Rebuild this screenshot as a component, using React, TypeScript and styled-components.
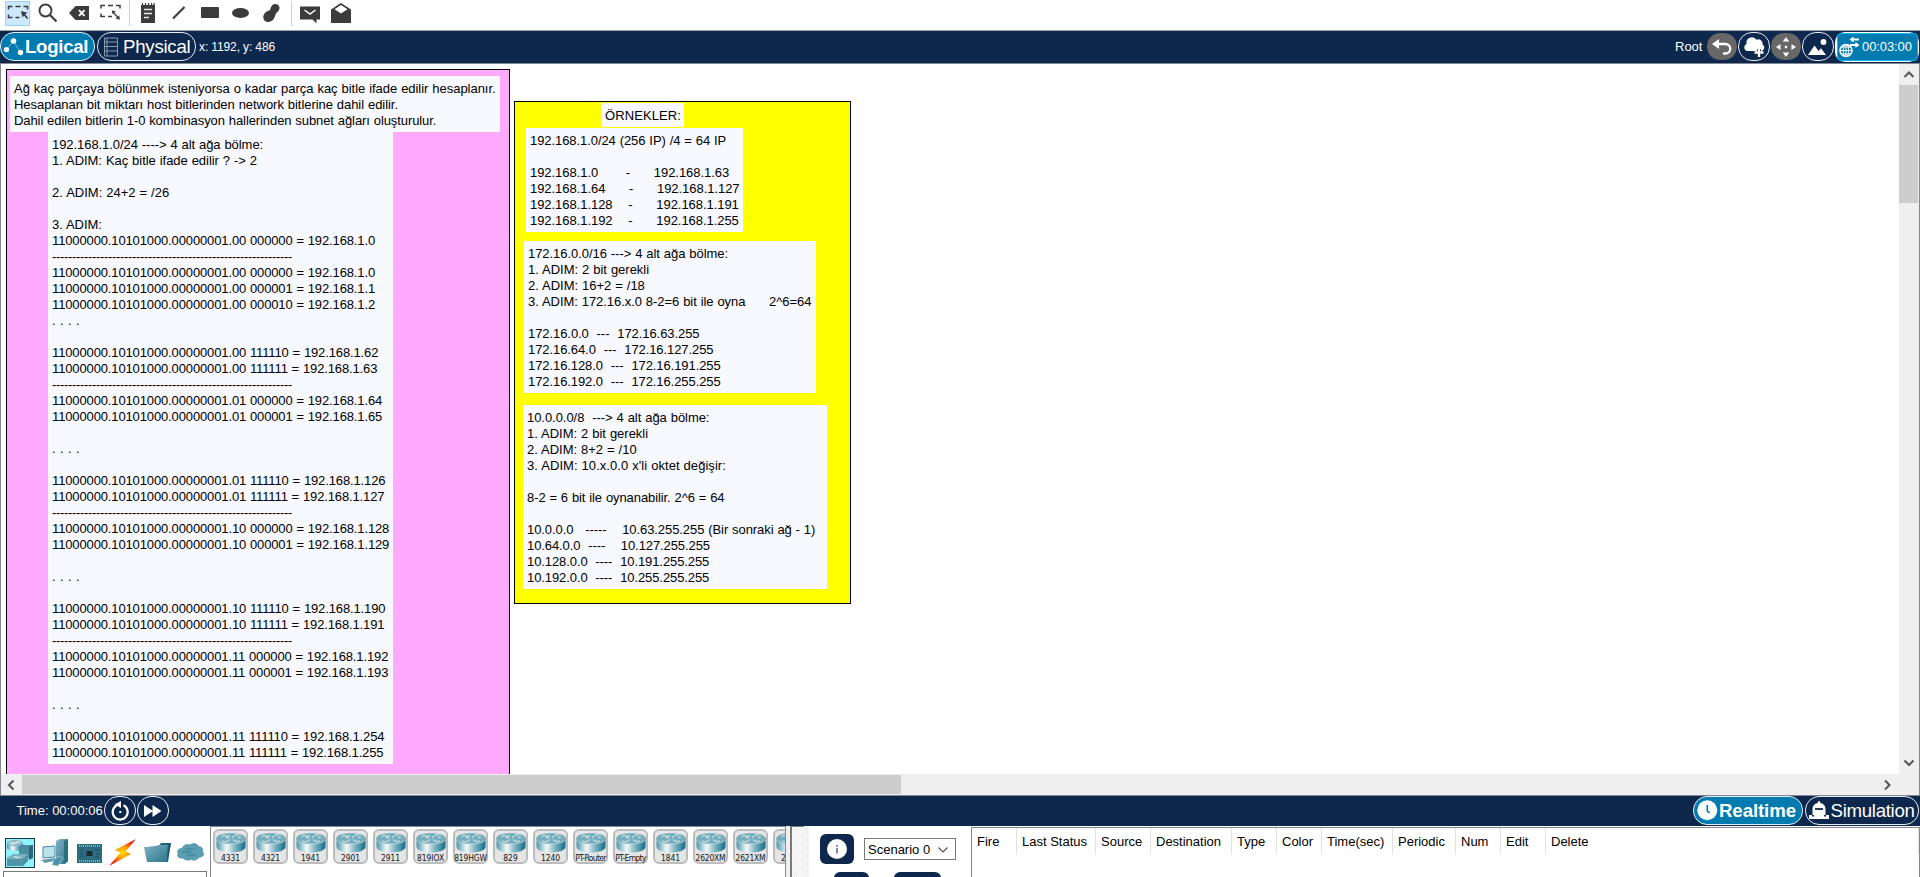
import React from 'react';
import styled, { createGlobalStyle, css } from 'styled-components';

const navy = '#0d274d';
const blue = '#007bb0';
const edge = '#828790';
const ink = '#3b3b3b';

const GlobalStyle = createGlobalStyle`
  * { box-sizing: border-box; }
  body { margin: 0; background: #fff; }
  #root { height: 877px; }
`;

const Shell = styled.div`
  display: flex;
  flex-direction: column;
  width: 1920px;
  height: 877px;
  overflow: hidden;
  background: #fff;
  color: #000;
  font: 13px/16px 'Liberation Sans', Arial, sans-serif;
  svg { display: block; flex: none; }
`;

/* ---------- toolbar ---------- */

const ToolBar = styled.div`
  display: flex;
  align-items: flex-start;
  height: 31px;
  flex: none;
  padding: 1px 0 0 5px;
  border-bottom: 1px solid #a0a0a0;
`;

const Tool = styled.div<{ $w: number; $active?: boolean }>`
  width: ${p => p.$w}px;
  height: 25px;
  flex: none;
  display: flex;
  ${p => p.$active && css`
    background: #cce8ff;
    box-shadow: inset 0 0 0 1px #99d1ff;
  `}
`;

const ToolDivider = styled.div`
  width: 1px;
  height: 25px;
  background: #cfcfcf;
`;

/* ---------- navigation bars ---------- */

const Bar = styled.div<{ $h: number; $pad: string }>`
  display: flex;
  align-items: flex-start;
  flex: none;
  height: ${p => p.$h}px;
  padding: ${p => p.$pad};
  background: ${navy};
  color: #fff;
`;

const Tab = styled.div<{ $w: number; $active?: boolean; $track: number; $pad: number }>`
  display: flex;
  align-items: center;
  width: ${p => p.$w}px;
  height: 29px;
  padding-left: ${p => p.$pad}px;
  flex: none;
  border: 1px solid #e6edf4;
  border-radius: 14px;
  background: ${p => (p.$active ? blue : navy)};
  font-size: 18.67px;
  font-weight: ${p => (p.$active ? 700 : 400)};
  letter-spacing: ${p => p.$track}px;
  line-height: 27px;
  white-space: nowrap;
`;

const BarText = styled.span<{ $size?: number; $track?: number; $w?: number }>`
  font-size: ${p => p.$size ?? 13}px;
  letter-spacing: ${p => p.$track ?? 0}px;
  width: ${p => (p.$w ? p.$w + 'px' : 'auto')};
  line-height: 30px;
  white-space: nowrap;
`;

const Spacer = styled.div`
  flex: 1;
`;

const Gap = styled.div<{ $w: number }>`
  width: ${p => p.$w}px;
  flex: none;
`;

const RoundButton = styled.div<{ $w: number; $disabled?: boolean }>`
  display: flex;
  align-items: center;
  justify-content: center;
  width: ${p => p.$w}px;
  height: 29px;
  flex: none;
  border: 1px solid ${p => (p.$disabled ? navy : '#e6edf4')};
  border-radius: 14px;
  background: ${p => (p.$disabled ? '#676767' : navy)};
`;

const TimerFrame = styled.div`
  width: 84px;
  height: 30px;
  padding: 1px 1px 0 2px;
  border-radius: 10px;
  background: #fff;
`;

const Timer = styled.div`
  display: flex;
  align-items: center;
  height: 28px;
  padding-left: 1px;
  gap: 2px;
  background: ${blue};
  border: 1px solid #0fb5ee;
  border-radius: 4px;
`;

/* ---------- workspace ---------- */

const Workspace = styled.div`
  display: grid;
  grid-template-columns: 1898px 20px;
  grid-template-rows: 710px 21px;
  height: 733px;
  flex: none;
  border: 1px solid ${edge};
  background: #efefef;
`;

const Canvas = styled.div`
  position: relative;
  overflow: hidden;
  background: #fff;
`;

const Shape = styled.div<{ $x: number; $y: number; $w: number; $h: number; $fill: string }>`
  position: absolute;
  left: ${p => p.$x}px;
  top: ${p => p.$y}px;
  width: ${p => p.$w}px;
  height: ${p => p.$h}px;
  background: ${p => p.$fill};
  border: 1px solid #000;
`;

const Note = styled.div<{ $x: number; $y: number; $w: number }>`
  position: absolute;
  left: ${p => p.$x}px;
  top: ${p => p.$y}px;
  width: ${p => p.$w}px;
  padding: 5px 0 3px 4px;
  background: #f8f8ff;
`;

const NoteLine = styled.div<{ $track: number }>`
  height: 16px;
  white-space: pre;
  word-spacing: 0.39px;
  letter-spacing: ${p => p.$track}px;
`;

const VScroll = styled.div`
  display: flex;
  flex-direction: column;
  align-items: center;
  width: 19px;
  height: 710px;
`;

const HScroll = styled.div`
  display: flex;
  align-items: center;
  height: 19px;
  margin-top: 1px;
`;

const ScrollArrow = styled.div<{ $w: number; $h: number }>`
  display: flex;
  align-items: center;
  justify-content: center;
  width: ${p => p.$w}px;
  height: ${p => p.$h}px;
`;

const Thumb = styled.div<{ $w: number; $h: number }>`
  width: ${p => p.$w}px;
  height: ${p => p.$h}px;
  background: #cdcdcd;
`;

/* ---------- bottom panels ---------- */

const Bottom = styled.div`
  display: flex;
  height: 51px;
`;

const Categories = styled.div`
  width: 210px;
  flex: none;
  padding: 12px 0 0 3px;
`;

const CategoryRow = styled.div`
  display: flex;
  height: 33px;
  padding-left: 2px;
`;

const SubCategoryBox = styled.div`
  width: 204px;
  height: 10px;
  border: 1px solid #7a7a7a;
`;

const DeviceList = styled.div`
  display: flex;
  width: 576px;
  flex: none;
  overflow: hidden;
  gap: 5px;
  padding: 2px 0 0 2px;
  border: 1px solid ${edge};
  border-bottom: 0;
`;

const DeviceTile = styled.div`
  display: flex;
  flex-direction: column;
  align-items: center;
  width: 35px;
  height: 35px;
  flex: none;
  padding-top: 1px;
  border: 2px solid #bcbcbc;
  border-radius: 6px;
  background: #e5e5e5;
`;

const DeviceName = styled.span<{ $track: number }>`
  font: 8.4px/10px 'DejaVu Sans Condensed', 'DejaVu Sans', sans-serif;
  font-stretch: condensed;
  letter-spacing: ${p => p.$track}px;
  white-space: nowrap;
  color: #111;
`;

const Splitter = styled.div`
  width: 4px;
  flex: none;
  background: #f0f0f0;
`;

const Grip = styled.div`
  width: 14px;
  flex: none;
  border-top: 1px solid #7a7a7a;
  border-left: 2px solid #7a7a7a;
  background: repeating-conic-gradient(#ececec 0 25%, #fff 0 50%) 0 0 / 2px 2px;
`;

const ScenarioPane = styled.div`
  display: flex;
  flex-direction: column;
  width: 167px;
  flex: none;
  border-left: 5px solid #f3f3f3;
  padding: 8px 0 0 11px;
`;

const ScenarioRow = styled.div`
  display: flex;
  align-items: flex-start;
  flex: none;
  height: 38px;
  gap: 10px;
`;

const InfoButton = styled.div`
  display: flex;
  align-items: center;
  justify-content: center;
  width: 34px;
  height: 30px;
  border-radius: 6px;
  background: ${navy};
`;

const Select = styled.div`
  display: flex;
  align-items: center;
  justify-content: space-between;
  width: 92px;
  height: 22px;
  margin-top: 4px;
  padding: 1px 6px 0 3px;
  border: 1px solid #7a7a7a;
`;

const PaneButton = styled.div<{ $w: number; $ml: number }>`
  width: ${p => p.$w}px;
  height: 24px;
  margin-left: ${p => p.$ml}px;
  border-radius: 6px;
  background: ${navy};
`;

const EventTable = styled.div`
  display: flex;
  flex: 1;
  margin-top: 1px;
  border: 1px solid ${edge};
  border-bottom: 0;
`;

const HeaderCell = styled.div<{ $w?: number }>`
  width: ${p => (p.$w ? p.$w + 'px' : 'auto')};
  flex: ${p => (p.$w ? 'none' : 1)};
  height: 26px;
  padding-left: 5px;
  line-height: 28px;
  border-right: 1px solid #e2e2e2;
  white-space: nowrap;
`;

/* ---------- icons ---------- */

const dashes = (x: number, y: number) => (
  <path
    d={`M${x} ${y + 3}v-3h4M${x + 7} ${y}h5M${x + 15} ${y}h4v3M${x} ${y + 8}v3h4M${x + 7} ${y + 11}h4`}
    fill="none" stroke={ink} strokeWidth="1.5"
  />
);

const SelectIcon = () => (
  <svg width="25" height="25">
    {dashes(3.5, 5.5)}
    <path d="M16 10l6.500 1.800-2.300 1.500 3 3.700-1.200 1-3-3.600-1.500 2z" fill={ink} />
  </svg>
);

const SearchIcon = () => (
  <svg width="20" height="25">
    <circle cx="7.5" cy="9.5" r="6" fill="none" stroke={ink} strokeWidth="1.9" />
    <path d="M12 14l6.5 6.5" stroke={ink} strokeWidth="2.2" />
  </svg>
);

const DeleteIcon = () => (
  <svg width="21" height="25">
    <path d="M0 12L6.5 5h13.500v14h-13.500z" fill={ink} />
    <path d="M10 9.200l5.500 5.600M15.500 9.200l-5.500 5.600" stroke="#fff" strokeWidth="1.9" />
  </svg>
);

const ResizeIcon = () => (
  <svg width="22" height="25">
    {dashes(1, 4.5)}
    <path d="M12.500 10.500l5 5.500" stroke={ink} strokeWidth="1.300" />
    <path d="M11.800 9.500l4 .8-3.200 2.900zM19.800 18.700l-.6-4.400-3.600 3.200z" fill={ink} />
  </svg>
);

const NoteIcon = () => (
  <svg width="15" height="25">
    <path d="M0 4h14v18H0z" fill={ink} />
    <path d="M1.500 2v3M4.500 2v3M7.500 2v3M10.500 2v3M13 2v3" stroke={ink} strokeWidth="1.200" />
    <path d="M3 8.500h8M3 12.500h8M3 16.500h5" stroke="#e8e8e8" strokeWidth="1.300" />
  </svg>
);

const LineIcon = () => (
  <svg width="14" height="25"><path d="M1 17.500L12.500 6" stroke={ink} strokeWidth="2.200" /></svg>
);
const RectIcon = () => (
  <svg width="18" height="25"><rect y="6" width="18" height="11" rx="1" fill={ink} /></svg>
);
const EllipseIcon = () => (
  <svg width="18" height="25"><ellipse cx="8.500" cy="12" rx="8.500" ry="5" fill={ink} /></svg>
);
const FreeformIcon = () => (
  <svg width="18" height="25">
    <path d="M12 3c3.500-.3 5.500 3 4 6-1 2-2.800 2.500-3.500 4.500-.8 2.500-1.500 5.500-5 7-3.500 1.400-7.200-.5-7.200-4.300 0-3.500 3-6 6-6.700 1-.3 1.200-2 1.700-3.300C8.700 4.300 10 3.200 12 3z" fill={ink} />
  </svg>
);
const MailIcon = () => (
  <svg width="21" height="25">
    <path d="M0 5.500h20v13h-3.500v4l-4-4H0z" fill={ink} />
    <path d="M4.500 9l5.500 4 5.500-4" fill="none" stroke="#fff" strokeWidth="1.500" />
  </svg>
);
const OpenMailIcon = () => (
  <svg width="21" height="25">
    <path d="M0 8.500L10 2l10 6.500V22H0z" fill={ink} />
    <path d="M3.500 8.300L10 4l6.500 4.300-6.500 4.200z" fill="#fff" />
  </svg>
);

const LogicalIcon = () => (
  <svg width="22" height="24" fill="#fff">
    <path d="M4 14L10.500 6 17 17" fill="none" stroke="#fff" opacity=".45" />
    <circle cx="3.500" cy="14.500" r="2.600" />
    <circle cx="10.500" cy="6" r="2.800" />
    <circle cx="17.500" cy="17.500" r="2.700" />
  </svg>
);
const RackIcon = () => (
  <svg width="15" height="20" fill="none" stroke="#8d9bb0">
    <path d="M.5 1h13v18H.5zM.5 5h13M.5 9.500h13M.5 14h13M3 1v18" />
  </svg>
);

const UndoIcon = () => (
  <svg width="22" height="18" fill="none" stroke="#fff">
    <path d="M6 6h8.500a4.500 4.500 0 010 9.500H12" strokeWidth="2.300" />
    <path d="M1 6l7-5v10z" fill="#fff" stroke="none" />
  </svg>
);
const CloudPlusIcon = () => (
  <svg width="22" height="20">
    <path d="M4 14a3.700 3.700 0 01-.4-7A5.500 5.500 0 0113.500 2.700a4.300 4.300 0 016 4.700 3.600 3.600 0 01-1 6.600z" fill="#fff" />
    <path d="M16 12v8M12.500 16h8" stroke={navy} strokeWidth="3.800" />
    <path d="M16 11.500v8.500M11.500 15.500h9" stroke="#fff" strokeWidth="2.300" />
  </svg>
);
const MoveIcon = () => (
  <svg width="22" height="20" fill="#fff">
    <path d="M11 0l3.200 4.500H7.800zM11 20l3.200-4.500H7.800zM1 10l4.500-3v6zM21 10l-4.500-3v6z" />
    <rect x="9.800" y="8.800" width="2.400" height="2.400" />
  </svg>
);
const PictureIcon = () => (
  <svg width="20" height="18" fill="#fff">
    <path d="M0 17L6.500 7.500l4 5.500 2.500-2.800L18 17z" /><circle cx="15.500" cy="4" r="2.900" />
  </svg>
);
const GlobeIcon = () => (
  <svg width="21" height="22" fill="none" stroke="#fff">
    <circle cx="7" cy="14.500" r="6" strokeWidth="1.500" />
    <ellipse cx="7" cy="14.500" rx="2.800" ry="6" />
    <path d="M1 14.500h12M2 11h10M2 18h10M7 8.500v12" />
    <path d="M12 3.500h8M11 9h8" strokeWidth="1.800" />
    <path d="M10.500 3.500l4-3v6zM20.500 9l-4-3v6z" fill="#fff" stroke="none" />
  </svg>
);
const ResetIcon = () => (
  <svg width="20" height="22" fill="none" stroke="#fff">
    <path d="M6.500 5.500a7.500 7.500 0 107-.2" strokeWidth="2.200" />
    <path d="M4.500 4.500L11 1v7z" fill="#fff" stroke="none" />
    <rect x="9.300" y="11" width="2" height="2" fill="#fff" stroke="none" />
  </svg>
);
const ForwardIcon = () => (
  <svg width="18" height="14" fill="#fff"><path d="M0 1l9 6-9 6zM8.500 1l9 6-9 6z" /></svg>
);
const ClockIcon = () => (
  <svg width="21" height="21">
    <circle cx="10.300" cy="10.300" r="10" fill="#fff" />
    <path d="M10.300 5v6l2.500 2" stroke={blue} strokeWidth="1.600" fill="none" />
  </svg>
);
const SimulationIcon = () => (
  <svg width="21" height="20" fill="#fff">
    <path d="M3.500 14V8c0-3.500 2-5.500 5-6l1-2h1l1 2c3 .5 5 2.500 5 6v6z" />
    <path d="M0 14h3v1.500h2V14h10v1.500h2V14h3v4H0z" />
    <path d="M6 8h8" stroke={navy} strokeWidth="1.800" />
  </svg>
);

const Chevron = ({ d, w = 2 }: { d: string; w?: number }) => (
  <svg width="12" height="12" fill="none" stroke="#555" strokeWidth={w}><path d={d} /></svg>
);

const Gradients = () => (
  <svg width="0" height="0">
    <defs>
      <linearGradient id="body">
        <stop offset="0" stopColor="#4d96ab" /><stop offset=".35" stopColor="#f4fafb" />
        <stop offset=".6" stopColor="#8dbdca" /><stop offset="1" stopColor="#0d6d86" />
      </linearGradient>
      <linearGradient id="teal" x2="1" y2="1">
        <stop offset="0" stopColor="#7fb4c5" /><stop offset="1" stopColor="#2b7488" />
      </linearGradient>
      <radialGradient id="fire">
        <stop offset="0" stopColor="#ffe600" /><stop offset=".45" stopColor="#ff9a00" /><stop offset="1" stopColor="#f01c00" />
      </radialGradient>
    </defs>
  </svg>
);

const RouterIcon = () => (
  <svg width="30" height="21" viewBox="0 0 30 21">
    <path d="M.5 6v9c0 3 6.500 5.500 14.500 5.500S29.500 18 29.500 15V6z" fill="url(#body)" />
    <ellipse cx="15" cy="6.500" rx="14.500" ry="5.500" fill="#76adbd" />
    <path d="M5 4.500l3-1 5 2M13 5.500l-3 .6M16 6l4-3.300 3 .3M25 5l-3 .5M14 7.500l-4 2.500-4-1M17 7.500l3 2 4-.5M12 3l2 1.500" fill="none" stroke="#dcecf0" />
    <path d="M1 8.500c3 4.500 25 4.500 28 0" fill="none" stroke="#c9e1e7" strokeWidth=".7" />
  </svg>
);

const NetworkDevicesIcon = () => (
  <svg width="30" height="30">
    <rect x=".5" y=".5" width="29" height="29" fill="#8ff3fb" stroke="#1c3a44" />
    <path d="M2 5v5c0 4 16 4 16 0V5z" fill="url(#body)" />
    <ellipse cx="10" cy="5" rx="8" ry="3.300" fill="#8fbecb" />
    <path d="M5 4.500l4 1 6-2M6 6.500l7-2.500" stroke="#eaf5f7" fill="none" />
    <path d="M14 9l3-2h11v13H14z" fill="#4a8da0" />
    <path d="M24 9l4-2v13l-4 2z" fill="#2a6879" />
    <path d="M2 20l7-4h14v7l-5 5H2z" fill="#4f93a6" />
    <path d="M2 20l7-4h14l-5 5H2z" fill="#79b0c0" />
    <path d="M8 19.300l4-1M11 20l5-1.200" stroke="#d3e9ee" fill="none" />
  </svg>
);
const EndDevicesIcon = () => (
  <svg width="28" height="30">
    <path d="M15 3l4-2h8v22l-3 3h-9z" fill="url(#teal)" /><path d="M23 3l4-2v22l-4 3z" fill="#2a7084" />
    <path d="M2 9l12-1v11L2 20z" fill="#b9e2ec" stroke="#4a8799" />
    <path d="M0 22l14-2 3 2-13 3z" fill="#5f9aab" /><path d="M13 21l6-3 3 2-5 8-6-1z" fill="#4d93a7" stroke="#cfe8ee" strokeWidth=".5" />
  </svg>
);
const ComponentsIcon = () => (
  <svg width="26" height="30">
    <rect y="6" width="25" height="19" fill="#2d6d80" />
    <path d="M2 8h21M2 23h21" stroke="#9bc4cf" strokeWidth="1.500" strokeDasharray="1 1" />
    <rect x="9.500" y="13" width="6" height="5" fill="#1b2a30" />
    <path d="M3 12h4M3 15h3M3 18h4M18 12h5M19 16h4M18 19h4" stroke="#1d4f5f" />
  </svg>
);
const ConnectionsIcon = () => (
  <svg width="28" height="30"><path d="M27 1L6 12l5.500 2.500L0 28l22-12-5.500-2.500z" fill="url(#fire)" /></svg>
);
const FolderIcon = () => (
  <svg width="28" height="30">
    <path d="M3 9l12-1 2-3h10l-3 19H7z" fill="#216375" /><path d="M0 9h12l2-2h10l-1 17H3z" fill="url(#teal)" />
    <path d="M27 5l-3 1-1 18z" fill="#1c596a" />
  </svg>
);
const CloudIcon = () => (
  <svg width="28" height="30">
    <path d="M6 20c-4 1-6.500-2-5-4.500-1.500-3 1-5.500 4-5C6 7 10 5.500 13 7c3-2.500 7.500-1.500 8.500 1.500 3.500 0 5 2.500 4 5 2.500 2.500.5 6-3 5.500-2 3-6 4-8.500 2.500-3 1.500-6.500.5-8-1.500z" fill="#5b9db1" stroke="#4b8fa4" strokeWidth=".6" />
    <path d="M8 11h9M5 14h10M10 17h9" stroke="#3a8096" strokeWidth="1.100" />
  </svg>
);
const InfoIcon = () => (
  <svg width="20" height="20">
    <circle cx="10" cy="10" r="10" fill="#fff" />
    <path d="M10 6v1.700M10 9v5.500" stroke="#6f7d97" strokeWidth="1.800" />
  </svg>
);

/* ---------- content ---------- */

type Line = [string, number];

const E: Line = ['', 0];
const RULE: Line = ['-'.repeat(60), -0.33];
const DOTS: Line = ['. . . .', 0.21];
const bits = (octet: string, host: string, ip: string): Line => [
  `11000000.10101000.00000001.${octet} ${host} = 192.168.1.${ip}`, -0.13,
];

const intro: Line[] = [
  ['Ağ kaç parçaya bölünmek isteniyorsa o kadar parça kaç bitle ifade edilir hesaplanır.', -0.035],
  ['Hesaplanan bit miktarı host bitlerinden network bitlerine dahil edilir.', -0.05],
  ['Dahil edilen bitlerin 1-0 kombinasyon hallerinden subnet ağları oluşturulur.', -0.085],
];

const steps: Line[] = [
  ['192.168.1.0/24 ----> 4 alt ağa bölme:', -0.06],
  ['1. ADIM: Kaç bitle ifade edilir ? -> 2', -0.04],
  E,
  ['2. ADIM: 24+2 = /26', 0],
  E,
  ['3. ADIM:', -0.05],
  bits('00', '000000', '0'),
  RULE,
  bits('00', '000000', '0'),
  bits('00', '000001', '1'),
  bits('00', '000010', '2'),
  DOTS,
  E,
  bits('00', '111110', '62'),
  bits('00', '111111', '63'),
  RULE,
  bits('01', '000000', '64'),
  bits('01', '000001', '65'),
  E,
  DOTS,
  E,
  bits('01', '111110', '126'),
  bits('01', '111111', '127'),
  RULE,
  bits('10', '000000', '128'),
  bits('10', '000001', '129'),
  E,
  DOTS,
  E,
  bits('10', '111110', '190'),
  bits('10', '111111', '191'),
  RULE,
  bits('11', '000000', '192'),
  bits('11', '000001', '193'),
  E,
  DOTS,
  E,
  bits('11', '111110', '254'),
  bits('11', '111111', '255'),
];

const classC: Line[] = [
  ['192.168.1.0/24 (256 IP) /4 = 64 IP', -0.07],
  E,
  ['192.168.1.0       -      192.168.1.63', -0.05],
  ['192.168.1.64      -      192.168.1.127', -0.05],
  ['192.168.1.128    -      192.168.1.191', -0.05],
  ['192.168.1.192    -      192.168.1.255', -0.05],
];

const classB: Line[] = [
  ['172.16.0.0/16 ---> 4 alt ağa bölme:', -0.05],
  ['1. ADIM: 2 bit gerekli', -0.02],
  ['2. ADIM: 16+2 = /18', -0.02],
  ['3. ADIM: 172.16.x.0 8-2=6 bit ile oyna      2^6=64', -0.055],
  E,
  ['172.16.0.0  ---  172.16.63.255', -0.07],
  ['172.16.64.0  ---  172.16.127.255', -0.08],
  ['172.16.128.0  ---  172.16.191.255', -0.08],
  ['172.16.192.0  ---  172.16.255.255', -0.08],
];

const classA: Line[] = [
  ['10.0.0.0/8  ---> 4 alt ağa bölme:', -0.05],
  ['1. ADIM: 2 bit gerekli', -0.02],
  ['2. ADIM: 8+2 = /10', -0.02],
  ["3. ADIM: 10.x.0.0 x'li oktet değişir:", 0.04],
  E,
  ['8-2 = 6 bit ile oynanabilir. 2^6 = 64', -0.09],
  E,
  ['10.0.0.0   -----    10.63.255.255 (Bir sonraki ağ - 1)', -0.075],
  ['10.64.0.0  ----    10.127.255.255', -0.09],
  ['10.128.0.0  ----  10.191.255.255', -0.09],
  ['10.192.0.0  ----  10.255.255.255', -0.09],
];

const devices: Line[] = [
  ['4331', 0], ['4321', 0], ['1941', 0], ['2901', 0], ['2911', 0],
  ['819IOX', 0], ['819HGW', -0.1], ['829', 0], ['1240', 0],
  ['PT-Router', -0.6], ['PT-Empty', -0.6], ['1841', 0],
  ['2620XM', -0.15], ['2621XM', -0.15], ['2811', 0],
];

const columns: [string, number?][] = [
  ['Fire', 45], ['Last Status', 79], ['Source', 55], ['Destination', 81], ['Type', 45],
  ['Color', 45], ['Time(sec)', 71], ['Periodic', 63], ['Num', 45], ['Edit', 45], ['Delete'],
];

const TextNote = ({ x, y, w, lines }: { x: number; y: number; w: number; lines: Line[] }) => (
  <Note $x={x} $y={y} $w={w}>
    {lines.map(([text, track], i) => <NoteLine key={i} $track={track}>{text}</NoteLine>)}
  </Note>
);

export default function App() {
  return (
    <Shell>
      <GlobalStyle />
      <ToolBar>
        <Tool $w={25} $active><SelectIcon /></Tool>
        <Gap $w={8} />
        <Tool $w={31}><SearchIcon /></Tool>
        <Tool $w={31}><DeleteIcon /></Tool>
        <Tool $w={29}><ResizeIcon /></Tool>
        <ToolDivider />
        <Gap $w={11} />
        <Tool $w={31}><NoteIcon /></Tool>
        <Tool $w={29}><LineIcon /></Tool>
        <Tool $w={31}><RectIcon /></Tool>
        <Tool $w={31}><EllipseIcon /></Tool>
        <Tool $w={28}><FreeformIcon /></Tool>
        <ToolDivider />
        <Gap $w={8} />
        <Tool $w={31}><MailIcon /></Tool>
        <Tool $w={22}><OpenMailIcon /></Tool>
      </ToolBar>

      <Bar $h={32} $pad="1px 1px 0 0">
        <Tab $w={95} $pad={2} $track={-0.3} $active><LogicalIcon />Logical</Tab>
        <Gap $w={2} />
        <Tab $w={99} $pad={6} $track={-0.25}><RackIcon /><Gap $w={4} />Physical</Tab>
        <Gap $w={3} />
        <BarText $size={12} $track={-0.12}>x: 1192, y: 486</BarText>
        <Spacer />
        <BarText $w={31}>Root</BarText>
        <RoundButton $w={32} $disabled><UndoIcon /></RoundButton>
        <RoundButton $w={32}><CloudPlusIcon /></RoundButton>
        <RoundButton $w={32} $disabled><MoveIcon /></RoundButton>
        <RoundButton $w={32}><PictureIcon /></RoundButton>
        <Gap $w={1} />
        <TimerFrame>
          <Timer><GlobeIcon /><BarText $track={-0.1}>00:03:00</BarText></Timer>
        </TimerFrame>
      </Bar>

      <Workspace>
        <Canvas>
          <Shape $x={5} $y={5} $w={504} $h={760} $fill="#ffaaff" />
          <TextNote x={47} y={68} w={345} lines={steps} />
          <TextNote x={9} y={12} w={490} lines={intro} />
          <Shape $x={513} $y={37} $w={337} $h={503} $fill="#ffff00" />
          <TextNote x={600} y={39} w={83} lines={[['ÖRNEKLER:', 0.08]]} />
          <TextNote x={525} y={64} w={217} lines={classC} />
          <TextNote x={523} y={177} w={292} lines={classB} />
          <TextNote x={522} y={341} w={304} lines={classA} />
        </Canvas>
        <VScroll>
          <ScrollArrow $w={19} $h={21}><Chevron d="M1.500 8L6 3.500l4.500 4.500" /></ScrollArrow>
          <Thumb $w={19} $h={118} />
          <Spacer />
          <ScrollArrow $w={19} $h={22}><Chevron d="M1.500 3.500L6 8 10.500 3.500" /></ScrollArrow>
        </VScroll>
        <HScroll>
          <ScrollArrow $w={21} $h={19}><Chevron d="M7.500 1.500L3 6l4.500 4.500" /></ScrollArrow>
          <Thumb $w={879} $h={19} />
          <Spacer />
          <ScrollArrow $w={23} $h={19}><Chevron d="M3 1.500L7.500 6 3 10.500" /></ScrollArrow>
        </HScroll>
      </Workspace>

      <Bar $h={30} $pad="0 1px 0 16.5px">
        <BarText $w={87.5}>Time: 00:00:06</BarText>
        <RoundButton $w={32}><ResetIcon /></RoundButton>
        <Gap $w={1} />
        <RoundButton $w={32}><ForwardIcon /></RoundButton>
        <Spacer />
        <Tab $w={110} $pad={3} $track={-0.1} $active><ClockIcon /><Gap $w={1} />Realtime</Tab>
        <Gap $w={2} />
        <Tab $w={114} $pad={3} $track={-0.3}><SimulationIcon /><Gap $w={0.5} />Simulation</Tab>
      </Bar>

      <Bottom>
        <Gradients />
        <Categories>
          <CategoryRow>
            <Tool $w={36}><NetworkDevicesIcon /></Tool>
            <Tool $w={36}><EndDevicesIcon /></Tool>
            <Tool $w={32}><ComponentsIcon /></Tool>
            <Tool $w={35}><ConnectionsIcon /></Tool>
            <Tool $w={33}><FolderIcon /></Tool>
            <Tool $w={28}><CloudIcon /></Tool>
          </CategoryRow>
          <SubCategoryBox />
        </Categories>
        <DeviceList>
          {devices.map(([name, track]) => (
            <DeviceTile key={name}>
              <RouterIcon />
              <DeviceName $track={track}>{name}</DeviceName>
            </DeviceTile>
          ))}
        </DeviceList>
        <Splitter />
        <Grip />
        <ScenarioPane>
          <ScenarioRow>
            <InfoButton><InfoIcon /></InfoButton>
            <Select>Scenario 0<Chevron d="M1.500 3.500L6 8 10.500 3.500" w={1.2} /></Select>
          </ScenarioRow>
          <ScenarioRow>
            <PaneButton $w={35} $ml={14} />
            <PaneButton $w={47} $ml={15} />
          </ScenarioRow>
        </ScenarioPane>
        <EventTable>
          {columns.map(([label, w]) => <HeaderCell key={label} $w={w}>{label}</HeaderCell>)}
        </EventTable>
      </Bottom>
    </Shell>
  );
}
